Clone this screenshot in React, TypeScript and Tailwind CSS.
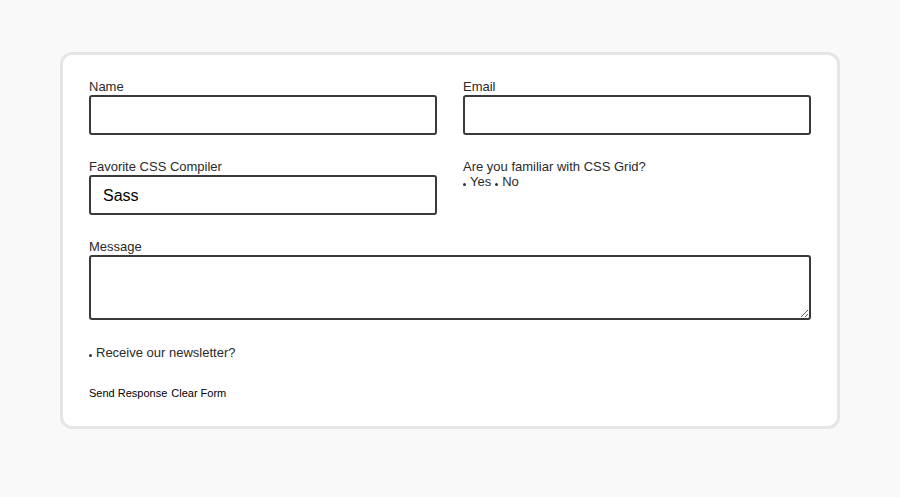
import React from "react";

function Dot() {
  return <span className="mr-[4px] inline-block h-[3px] w-[3px] rounded-full bg-[#333]" />;
}

export default function App() {
  return (
    <div className="min-h-[497px] bg-[#f9f9f9] pt-[52px] font-['Liberation_Sans',Arial,sans-serif] text-[#2a2a2a]">
      <form
        className="mx-auto w-[780px] rounded-[12px] border-[3px] border-[#e5e5e5] bg-white px-[26px] pt-[23px] pb-[26px]"
        onSubmit={(e) => e.preventDefault()}
      >
        <div className="grid grid-cols-2 gap-x-[26px] gap-y-[23px]">
          <label className="flex flex-col text-[13px] leading-[17px]">
            Name
            <input
              type="text"
              className="h-[40px] rounded-[3px] border-2 border-[#3a3a3a] px-[12px] text-[16px] outline-none"
            />
          </label>
          <label className="flex flex-col text-[13px] leading-[17px]">
            Email
            <input
              type="email"
              className="h-[40px] rounded-[3px] border-2 border-[#3a3a3a] px-[12px] text-[16px] outline-none"
            />
          </label>
          <label className="flex flex-col text-[13px] leading-[17px]">
            Favorite CSS Compiler
            <select className="h-[40px] appearance-none rounded-[3px] border-2 border-[#3a3a3a] bg-white px-[12px] text-[16px] text-black outline-none">
              <option>Sass</option>
              <option>Less</option>
              <option>Stylus</option>
            </select>
          </label>
          <div className="flex flex-col text-[13px] leading-[14px]">
            <span className="leading-[17px]">Are you familiar with CSS Grid?</span>
            <div className="flex items-baseline">
              <span className="flex items-baseline">
                <Dot />
                Yes
              </span>
              <span className="ml-[4px] flex items-baseline">
                <Dot />
                No
              </span>
            </div>
          </div>
          <label className="col-span-2 flex flex-col text-[13px] leading-[17px]">
            Message
            <textarea className="h-[65px] rounded-[3px] border-2 border-[#3a3a3a] px-[12px] py-[8px] text-[16px] outline-none" />
          </label>
        </div>
        <div className="mt-[25px] flex items-baseline text-[13px] leading-[16px]">
          <Dot />
          Receive our newsletter?
        </div>
        <div className="mt-[25px] flex gap-[4px] text-[11px] leading-[14px] text-black">
          <button type="submit">Send Response</button>
          <button type="reset">Clear Form</button>
        </div>
      </form>
    </div>
  );
}
